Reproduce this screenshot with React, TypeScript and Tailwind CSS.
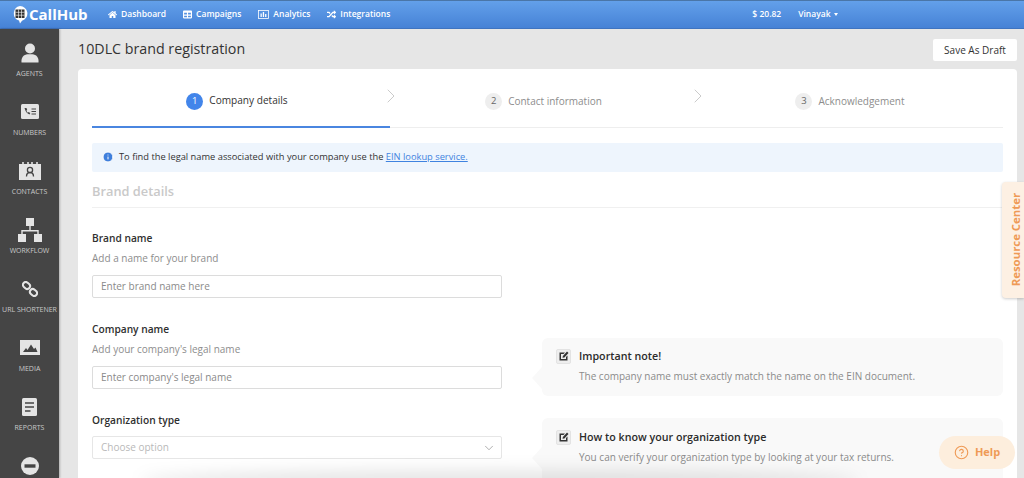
import { ChevronDown, ChevronRight, CircleHelp, Info } from "lucide-react"
import { FaHome, FaRandom, FaTable } from "react-icons/fa"

const font = "font-['Open_Sans','Noto_Sans',sans-serif]"

function AgentIcon() {
    return (
        <svg width="20" height="20" viewBox="0 0 20 20" fill="#e4e4e4">
            <circle cx="10" cy="5.5" r="5" />
            <path d="M1.5 19.5c-.6-5 2.5-8 6-8.2h5c3.500.2 6.600 3.200 6 8.200z" />
        </svg>
    )
}

function NumbersIcon() {
    return (
        <svg width="18" height="15" viewBox="0 0 18 15">
            <rect width="18" height="15" rx="1.500" fill="#e4e4e4" />
            <path d="M3.500 4c.8 3.500 2.500 5.500 5 6.500l.8-1.500-1.800-1-.7.700c-.7-.6-1.100-1.300-1.400-2.100l.8-.6-.7-2z" fill="#444" />
            <path d="M10.500 5h4.500M10.500 7.500h4.500M10.500 10h4.500" stroke="#444" strokeWidth="1" />
        </svg>
    )
}

function ContactsIcon() {
    return (
        <svg width="24" height="20" viewBox="0 0 24 20">
            <path d="M1 3h22v16H1z" fill="#e4e4e4" />
            <path d="M5 1v3M10 1v3M14 1v3M19 1v3" stroke="#e4e4e4" strokeWidth="1.600" />
            <circle cx="12" cy="9" r="2.600" fill="none" stroke="#444" strokeWidth="1.300" />
            <path d="M8.500 15.500c0-3 1.500-4 3.500-4s3.500 1 3.500 4" fill="none" stroke="#444" strokeWidth="1.300" />
        </svg>
    )
}

function WorkflowIcon() {
    return (
        <svg width="24" height="24" viewBox="0 0 24 24" fill="#e4e4e4">
            <rect x="8" y="0" width="8" height="8" />
            <rect x="0" y="16" width="8" height="8" />
            <rect x="16" y="16" width="8" height="8" />
            <path d="M11.300 8h1.400v4H20.700v4h-1.400v-2.600H4.700V16H3.300v-4h8z" />
        </svg>
    )
}

function LinkIcon() {
    return (
        <svg width="16" height="16" viewBox="0 0 16 16" fill="none" stroke="#e4e4e4" strokeWidth="2">
            <rect x="-3.800" y="-2.800" width="7.600" height="5.600" rx="2.800" transform="translate(4.500 4.500) rotate(42)" />
            <rect x="-3.800" y="-2.800" width="7.600" height="5.600" rx="2.800" transform="translate(11.500 11.500) rotate(42)" />
        </svg>
    )
}

function MediaIcon() {
    return (
        <svg width="20" height="15" viewBox="0 0 20 15">
            <rect width="20" height="15" fill="#e4e4e4" />
            <path d="M3 12l3-4 1.500 2L11 4.500 14 9l1.500-1.500L17.500 12z" fill="#444" />
        </svg>
    )
}

function ReportsIcon() {
    return (
        <svg width="15" height="18" viewBox="0 0 15 18">
            <rect width="15" height="18" rx="1.500" fill="#e4e4e4" />
            <path d="M3 5h9M3 9h9M3 13h5.500" stroke="#444" strokeWidth="1.600" />
        </svg>
    )
}

function BlockIcon() {
    return (
        <svg width="18" height="18" viewBox="0 0 18 18">
            <circle cx="9" cy="9" r="9" fill="#e4e4e4" />
            <rect x="3.500" y="7.300" width="11" height="3.400" fill="#444" />
        </svg>
    )
}

function AnalyticsIcon() {
    return (
        <svg width="11" height="9" viewBox="0 0 11 9">
            <rect x="0.500" y="0.500" width="10" height="8" fill="none" stroke="#fff" strokeWidth="0.800" />
            <path d="M2.500 3.500h1.300V7H2.500zM4.800 2h1.300v5H4.800zM7.100 4h1.300v3H7.100z" fill="#fff" />
        </svg>
    )
}

function EditBadge() {
    return (
        <div className="flex h-[15px] w-[15px] shrink-0 items-center justify-center rounded-[2px] border border-[#e3e3e3] bg-[#eeeeee]">
            <svg width="10" height="10" viewBox="0 0 10 10">
                <path d="M0.500 1.500h5.500L4.500 3H2v5h5V6l1.500-1.500v5H0.500z" fill="#333" />
                <path d="M3.500 6.800l.4-1.900L8 .6l1.500 1.500L5.400 6.400z" fill="#333" />
            </svg>
        </div>
    )
}

function Note({ title, text, className }: { title: string; text: string; className: string }) {
    return (
        <div className={`relative rounded-md bg-[#f9f9f9] pl-[14px] pr-3 ${className}`}>
            <div className="absolute left-[-10px] top-[29px] h-0 w-0 border-y-[11px] border-r-[10px] border-y-transparent border-r-[#f9f9f9]" />
            <div className="flex items-center gap-2">
                <EditBadge />
                <span className="text-[10.700px] font-semibold leading-[16px] text-[#2b2b2b]">{title}</span>
            </div>
            <p className="mt-[4px] pl-[23px] text-[10px] leading-[16px] text-[#8b8b8b]">{text}</p>
        </div>
    )
}

function Field({ label, help, placeholder, className }: { label: string; help: string; placeholder: string; className: string }) {
    return (
        <div className={className}>
            <div className="text-[10.200px] font-semibold leading-[16px] text-[#2f2f2f]">{label}</div>
            <div className="mt-[4px] text-[10px] leading-[16px] text-[#8d8d8d]">{help}</div>
            <div className="mt-[9px] flex h-[23px] items-center rounded-[2px] border border-[#dcdcdc] bg-white pl-[8px] text-[10px] text-[#8a8a8a]">{placeholder}</div>
        </div>
    )
}

export default function App() {
    const nav = [
        { label: "Dashboard", icon: <FaHome size={9} /> },
        { label: "Campaigns", icon: <FaTable size={9} /> },
        { label: "Analytics", icon: <AnalyticsIcon /> },
        { label: "Integrations", icon: <FaRandom size={9} /> },
    ]
    const side = [
        { label: "AGENTS", icon: <AgentIcon /> },
        { label: "NUMBERS", icon: <NumbersIcon /> },
        { label: "CONTACTS", icon: <ContactsIcon /> },
        { label: "WORKFLOW", icon: <WorkflowIcon /> },
        { label: "URL SHORTENER", icon: <LinkIcon /> },
        { label: "MEDIA", icon: <MediaIcon /> },
        { label: "REPORTS", icon: <ReportsIcon /> },
        { label: "", icon: <BlockIcon /> },
    ]
    return (
        <div className={`relative flex h-[478px] w-[1024px] flex-col overflow-hidden bg-[#e6e6e6] ${font}`}>
            <header className="flex h-[29px] shrink-0 items-center border-y border-t-[#4a76a8] border-b-[#3f74c0] bg-gradient-to-b from-[#63a0ea] to-[#4682d6] text-white">
                <div className="flex w-[108px] shrink-0 items-center pl-[12px]">
                    <svg width="16" height="18" viewBox="0 0 16 18">
                        <path d="M8 0a7.500 7.500 0 0 1 2 14.700L8 17.500l-1-3A7.500 7.500 0 0 1 8 0z" fill="#fff" />
                        <rect x="3.500" y="3.500" width="9" height="8.500" fill="#333" />
                        <path d="M6.500 3.500v8.500M9.500 3.500v8.500M3.500 6.300h9M3.500 9.200h9" stroke="#fff" strokeWidth="0.600" />
                    </svg>
                    <span className="ml-[1px] text-[15px] font-bold leading-none">CallHub</span>
                </div>
                <nav className="flex items-center gap-[17px] text-[8.500px] font-semibold">
                    {nav.map((item) => (
                        <div key={item.label} className="flex items-center gap-[4px]">
                            {item.icon}
                            <span>{item.label}</span>
                        </div>
                    ))}
                </nav>
                <div className="ml-[362px] text-[8.500px] font-semibold">$ 20.82</div>
                <div className="ml-[17px] flex items-center gap-[3px] text-[8.500px] font-semibold">
                    Vinayak
                    <span className="h-0 w-0 border-x-[2.500px] border-t-[3px] border-x-transparent border-t-white" />
                </div>
            </header>
            <div className="flex min-h-0 flex-1">
                <aside className="w-[59px] shrink-0 bg-[#454545] pt-[8px] shadow-[1px_0_2px_rgba(0,0,0,0.25)]">
                    {side.map((item, i) => (
                        <div key={i} className="flex h-[59px] flex-col items-center text-[#c9c9c9]">
                            <div className="flex h-[31px] items-center justify-center">{item.icon}</div>
                            <span className="whitespace-nowrap text-[7px] leading-[12px]">{item.label}</span>
                        </div>
                    ))}
                </aside>
                <main className="min-w-0 flex-1 pl-[19px] pr-[7px]">
                    <div className="flex h-[40px] items-start justify-between">
                        <h1 className="mt-[9px] text-[14.250px] leading-[22px] text-[#333333]">10DLC brand registration</h1>
                        <button className="mt-[10px] h-[22px] w-[84px] rounded-[2px] bg-white text-[10px] text-[#333333]">Save As Draft</button>
                    </div>
                    <div className="h-[420px] rounded-t-[4px] bg-white px-[14px]">
                        <div className="flex h-[59px] border-b border-[#eeeeee]">
                            <div className="relative flex h-[59px] w-[298px] items-center justify-center gap-[6px] border-b-2 border-[#4a86e0] pr-[8px] pt-[7px]">
                                <span className="flex h-[17px] w-[17px] items-center justify-center rounded-full bg-[#4285ea] text-[9.500px] text-white">1</span>
                                <span className="text-[10.100px] text-[#333333]">Company details</span>
                                <ChevronRight size={24} strokeWidth={0.6} className="absolute right-[-13px] top-[15px] text-[#a8a8a8]" />
                            </div>
                            <div className="relative flex h-[59px] w-[307px] items-center justify-center gap-[6px] pt-[5px]">
                                <span className="flex h-[17px] w-[17px] items-center justify-center rounded-full bg-[#eeeeee] text-[9.500px] text-[#666666]">2</span>
                                <span className="text-[10px] text-[#8d8d8d]">Contact information</span>
                                <ChevronRight size={24} strokeWidth={0.6} className="absolute right-[-13px] top-[15px] text-[#a8a8a8]" />
                            </div>
                            <div className="flex h-[59px] flex-1 items-center justify-center gap-[6px] pt-[5px]">
                                <span className="flex h-[17px] w-[17px] items-center justify-center rounded-full bg-[#eeeeee] text-[9.500px] text-[#666666]">3</span>
                                <span className="text-[10px] text-[#8d8d8d]">Acknowledgement</span>
                            </div>
                        </div>
                        <div className="mt-[15px] flex h-[29px] items-center gap-[5px] rounded-[2px] bg-[#eef5fd] pb-[2px] pl-[10px] text-[9.300px] text-[#333333]">
                            <Info size={12} fill="#3f7fdc" stroke="#fff" strokeWidth={2} />
                            <span>
                                To find the legal name associated with your company use the{" "}
                                <span className="text-[#3f83e0] underline">EIN lookup service.</span>
                            </span>
                        </div>
                        <div className="mt-[10px] border-b border-[#f0f0f0] pb-[7px] text-[12.800px] font-semibold leading-[18px] text-[#c9c9c9]">Brand details</div>
                        <div className="flex">
                            <div className="w-[410px] shrink-0">
                                <Field className="mt-[22px]" label="Brand name" help="Add a name for your brand" placeholder="Enter brand name here" />
                                <Field className="mt-[23px]" label="Company name" help="Add your company's legal name" placeholder="Enter company's legal name" />
                                <div className="mt-[23px] text-[10.200px] font-semibold leading-[16px] text-[#2f2f2f]">Organization type</div>
                                <div className="mt-[8px] flex h-[23px] items-center justify-between rounded-[2px] border border-[#e6e6e6] bg-white pl-2 pr-[5px] text-[10px] text-[#b9b9b9]">
                                    Choose option
                                    <ChevronDown size={14} strokeWidth={1} className="text-[#777777]" />
                                </div>
                            </div>
                            <div className="ml-[40px] min-w-0 flex-1 pt-[130px]">
                                <Note className="h-[58px] pt-[10px]" title="Important note!" text="The company name must exactly match the name on the EIN document." />
                                <Note className="mt-[22px] h-[70px] pt-[11px]" title="How to know your organization type" text="You can verify your organization type by looking at your tax returns." />
                            </div>
                        </div>
                    </div>
                </main>
            </div>
            <div className="absolute bottom-[-14px] left-[140px] h-[22px] w-[720px] rounded-[50%] bg-black/10 blur-[8px]" />
            <div className="absolute right-0 top-[182px] flex h-[116px] w-[22px] items-center justify-center rounded-l-[4px] bg-[#fdf0e3] pl-[6px] shadow-[0_1px_3px_rgba(0,0,0,0.2)]">
                <span className="-rotate-90 whitespace-nowrap text-[11.400px] font-bold text-[#ef9a56]">Resource Center</span>
            </div>
            <div className="absolute bottom-[9px] right-[9px] flex h-[33px] w-[76px] items-center justify-center gap-[6px] rounded-full bg-[#fdeedd]">
                <CircleHelp size={15} strokeWidth={1.800} className="text-[#ef9a56]" />
                <span className="text-[11px] font-bold text-[#ef9a56]">Help</span>
            </div>
        </div>
    )
}
